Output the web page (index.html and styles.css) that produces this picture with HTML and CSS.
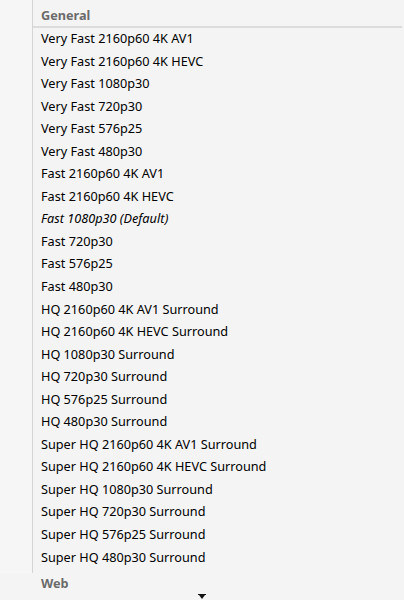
FILE: index.html
```html
<!DOCTYPE html>
<html lang="en">
<head>
    <meta charset="UTF-8">
    <title>Presets</title>
    <link rel="stylesheet" href="styles.css">
</head>
<body>
    <div class="panel">
        <div class="gutter"></div>
        <div class="list">
            <div class="group">General</div>
            <div class="rule"></div>
            <ul class="items">
                <li>Very Fast 2160p60 4K AV1</li>
                <li>Very Fast 2160p60 4K HEVC</li>
                <li>Very Fast 1080p30</li>
                <li>Very Fast 720p30</li>
                <li>Very Fast 576p25</li>
                <li>Very Fast 480p30</li>
                <li>Fast 2160p60 4K AV1</li>
                <li>Fast 2160p60 4K HEVC</li>
                <li class="default">Fast 1080p30 (Default)</li>
                <li>Fast 720p30</li>
                <li>Fast 576p25</li>
                <li>Fast 480p30</li>
                <li>HQ 2160p60 4K AV1 Surround</li>
                <li>HQ 2160p60 4K HEVC Surround</li>
                <li>HQ 1080p30 Surround</li>
                <li>HQ 720p30 Surround</li>
                <li>HQ 576p25 Surround</li>
                <li>HQ 480p30 Surround</li>
                <li>Super HQ 2160p60 4K AV1 Surround</li>
                <li>Super HQ 2160p60 4K HEVC Surround</li>
                <li>Super HQ 1080p30 Surround</li>
                <li>Super HQ 720p30 Surround</li>
                <li>Super HQ 576p25 Surround</li>
                <li>Super HQ 480p30 Surround</li>
            </ul>
            <div class="group web">Web</div>
        </div>
    </div>
    <div class="more">
        <svg width="8" height="6" viewBox="0 0 8 6"><rect x="0" y="0" width="8" height="1" fill="#111"/><path d="M1 1 L7 1 L4 5 Z" fill="#111"/></svg>
    </div>
</body>
</html>
```

FILE: styles.css
```css
body {
    margin: 0;
    background-color: #f4f4f4;
    font-family: "Noto Sans", "Open Sans", sans-serif;
    font-size: 12.7px;
    color: #000;
    width: 404px;
    height: 600px;
    overflow: hidden;
}
.panel {
    display: flex;
    height: 573px;
}
.gutter {
    width: 32px;
    background-color: #f6f6f6;
    border-right: 1px solid #d4d4d4;
}
.list {
    flex: 1;
}
.group {
    font-weight: bold;
    color: #6b6b6b;
    padding: 5px 0 0 8px;
    height: 21px;
    line-height: 20px;
}
.rule {
    height: 2px;
    background-color: #dcdcdc;
    margin-right: 2px;
}
.items {
    list-style: none;
    margin: 0;
    padding: 0;
}
.items li {
    padding-left: 8px;
    height: 22.56px;
    line-height: 21px;
}
.items li.default {
    font-style: italic;
}
.group.web {
    padding-top: 4px;
}
.more {
    display: flex;
    justify-content: center;
    padding-top: 21px;
}
```
